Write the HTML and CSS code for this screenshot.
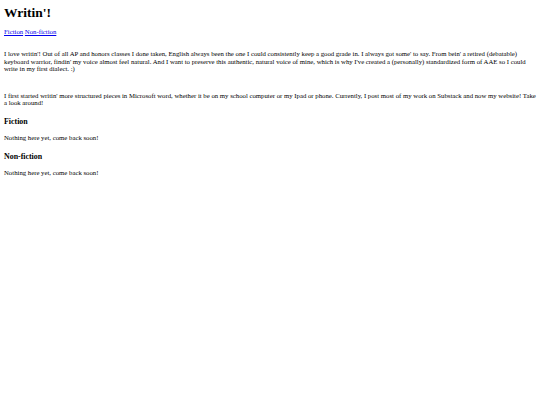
FILE: index.html
```html
<!DOCTYPE html>
<html lang="en">
<head>
<meta charset="utf-8">
<title>Writin'!</title>
<link rel="stylesheet" href="styles.css">
</head>
<body class="page">
<h1 class="title">Writin'!</h1>
<nav class="nav"><a class="nav-link" href="#fiction">Fiction</a> <a class="nav-link" href="#nonfiction">Non-fiction</a></nav>
<p class="intro">I love writin'! Out of all AP and honors classes I done taken, English always been the one I could consistently keep a good grade in. I always got some' to say. From bein' a retired (debatable) keyboard warrior, findin' my voice almost feel natural. And I want to preserve this authentic, natural voice of mine, which is why I've created a (personally) standardized form of AAE so I could write in my first dialect. :)</p>
<p class="intro second">I first started writin' more structured pieces in Microsoft word, whether it be on my school computer or my Ipad or phone. Currently, I post most of my work on Substack and now my website! Take a look around!</p>
<h3 class="section" id="fiction">Fiction</h3>
<p class="note">Nothing here yet, come back soon!</p>
<h3 class="section" id="nonfiction">Non-fiction</h3>
<p class="note">Nothing here yet, come back soon!</p>
</body>
</html>
```
FILE: styles.css
```css
html { background: #fff; }
.page {
  margin: 0;
  padding: 5px 4px 4px;
  font-family: "Liberation Serif", "Times New Roman", serif;
  font-size: 6.75px;
  line-height: 7.8px;
  color: #000;
}
.title {
  font-size: 13.5px;
  line-height: 16px;
  font-weight: bold;
  margin: 0 0 7px;
}
.nav { margin: 0; }
.nav-link { color: #0000ee; text-decoration: underline; }
.intro { margin: 14px 0 0; }
.second { margin-top: 18.5px; }
.section {
  font-size: 7.9px;
  line-height: 9px;
  font-weight: bold;
  margin: 9.5px 0 0;
}
.note { margin: 8.5px 0 0; }
```
